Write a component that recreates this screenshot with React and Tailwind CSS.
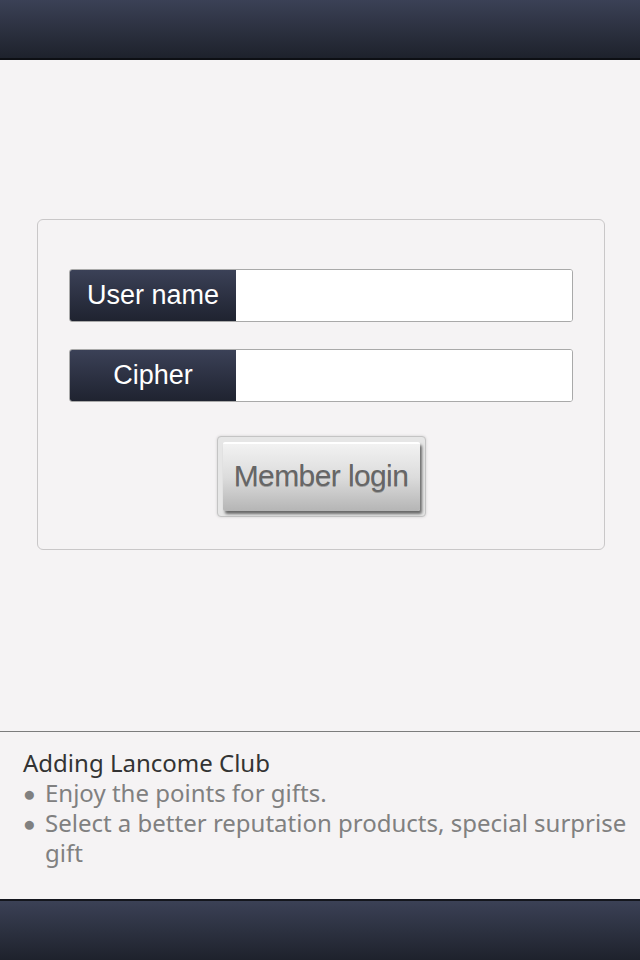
import React from "react";

function Field({ label }) {
  return (
    <div className="flex h-[53px] rounded-[3px] border border-[#a9a9a9] bg-white overflow-hidden">
      <div className="w-[166px] flex items-center justify-center bg-gradient-to-b from-[#3b4157] to-[#1f2330] text-white text-[27px] font-['Liberation_Sans',Arial,sans-serif]">
        {label}
      </div>
      <div className="flex-1 bg-white" />
    </div>
  );
}

export default function App() {
  return (
    <div className="w-[640px] h-[960px] flex flex-col bg-[#f5f3f4] font-['Noto_Sans',sans-serif]">
      {/* Top bar */}
      <div className="h-[60px] shrink-0 bg-gradient-to-b from-[#3b4156] to-[#1e222c] border-b-2 border-[#0d0f14]" />

      {/* Login card */}
      <div className="flex-1 pl-[37px] pr-[35px] pt-[159px]">
        <div className="h-[331px] rounded-[6px] border border-[#c9c7c8] px-[31px] pt-[49px]">
          <Field label="User name" />
          <div className="h-[27px]" />
          <Field label="Cipher" />
          <div className="flex justify-center pt-[34px]">
            <div className="w-[209px] h-[81px] rounded-[4px] border border-[#c4c4c4] bg-[#e6e6e6] p-[5px] shadow-[0_0_3px_rgba(0,0,0,0.15)]">
              <button className="w-full h-full pb-[4px] rounded-[2px] bg-gradient-to-b from-[#f2f2f2] via-[#dcdcdc] to-[#b5b5b5] border-t-2 border-t-white shadow-[2px_3px_3px_rgba(0,0,0,0.55)] text-[#666666] text-[30px] tracking-[-0.6px] font-['Liberation_Sans',Arial,sans-serif] [text-shadow:0_1px_0_rgba(0,0,0,0.25)]">
                Member login
              </button>
            </div>
          </div>
        </div>
      </div>

      {/* Info */}
      <div className="shrink-0 border-t border-[#7c7c7c] pl-[23px] pr-[8px] pt-[16px] pb-[31px] text-[24px] leading-[30px]">
        <div className="text-[#333333]">Adding Lancome Club</div>
        <div className="flex text-[#808080]">
          <span className="w-[22px] shrink-0 text-[21px]">●</span>
          <span>Enjoy the points for gifts.</span>
        </div>
        <div className="flex text-[#808080]">
          <span className="w-[22px] shrink-0 text-[21px]">●</span>
          <span>Select a better reputation products, special surprise gift</span>
        </div>
      </div>

      {/* Bottom bar */}
      <div className="h-[61px] shrink-0 bg-gradient-to-b from-[#3b4156] to-[#1e222c] border-t-2 border-[#14161d]" />
    </div>
  );
}
